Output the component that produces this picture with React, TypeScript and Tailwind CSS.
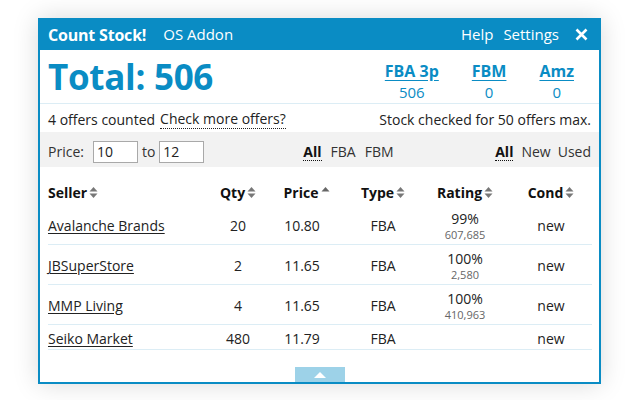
import React from "react";

function SortBoth() {
  return (
    <svg width="9" height="13" viewBox="0 0 9 13" className="inline-block ml-[2px]">
      <path d="M0.5 5.5 L4.5 1 L8.5 5.5 Z" fill="#777" />
      <path d="M0.5 7.5 L4.5 12 L8.5 7.5 Z" fill="#777" />
    </svg>
  );
}
function SortUp() {
  return (
    <svg width="9" height="13" viewBox="0 0 9 13" className="inline-block ml-[3px]">
      <path d="M0.5 5.5 L4.5 1 L8.5 5.5 Z" fill="#666" />
    </svg>
  );
}

const rows = [
  { seller: "Avalanche Brands", qty: "20", price: "10.80", type: "FBA", rating: "99%", count: "607,685", cond: "new" },
  { seller: "JBSuperStore", qty: "2", price: "11.65", type: "FBA", rating: "100%", count: "2,580", cond: "new" },
  { seller: "MMP Living", qty: "4", price: "11.65", type: "FBA", rating: "100%", count: "410,963", cond: "new" },
  { seller: "Seiko Market", qty: "480", price: "11.79", type: "FBA", rating: "", count: "", cond: "new" },
];

const grid = "grid grid-cols-[160px_60px_68px_94px_70px_91px]";

export default function App() {
  return (
    <div
      className="w-[640px] h-[400px] bg-white pt-[18px] pl-[38px] overflow-hidden"
      style={{ fontFamily: '"Open Sans", "Noto Sans", sans-serif' }}
    >
      <div className="w-[563px] h-[366px] border-2 border-t-0 border-[#0a8cc4] bg-white flex flex-col shadow-[0_0_24px_rgba(0,0,0,0.15)]">
        {/* header */}
        <div className="h-[32px] bg-[#0a8cc4] -mx-[2px] px-[10px] pt-[1px] flex items-center text-white text-[15px] leading-none">
          <span className="font-bold text-[16px] tracking-[-0.2px]">Count Stock!</span>
          <span className="ml-[17px]">OS Addon</span>
          <span className="ml-auto">Help</span>
          <span className="ml-[10px]">Settings</span>
          <svg width="13" height="13" viewBox="0 0 13 13" className="ml-[16px] mr-[3px]">
            <path d="M1.5 1.5 L11.5 11.5 M11.5 1.5 L1.5 11.5" stroke="white" strokeWidth="2.6" />
          </svg>
        </div>

        {/* totals */}
        <div className="h-[54px] flex items-center pl-[8px] pr-[25px] border-b border-[#dcedf5]">
          <div className="text-[35px] font-bold text-[#0a8cc4] leading-none tracking-[-0.3px]">Total: 506</div>
          <div className="ml-auto flex gap-[33px] text-[#0a8cc4] mt-[10px]">
            <div className="flex flex-col items-center leading-[21px]">
              <span className="font-bold text-[16px] underline underline-offset-[3px]">FBA 3p</span>
              <span className="text-[15px]">506</span>
            </div>
            <div className="flex flex-col items-center leading-[21px]">
              <span className="font-bold text-[16px] underline underline-offset-[3px]">FBM</span>
              <span className="text-[15px]">0</span>
            </div>
            <div className="flex flex-col items-center leading-[21px]">
              <span className="font-bold text-[16px] underline underline-offset-[3px]">Amz</span>
              <span className="text-[15px]">0</span>
            </div>
          </div>
        </div>

        {/* info line */}
        <div className="h-[28px] pt-[3px] flex items-center px-[8px] text-[14px] text-[#222]">
          <span>4 offers counted</span>
          <span className="ml-[5px] border-b border-dotted border-[#222] leading-[18px]">Check more offers?</span>
          <span className="ml-auto">Stock checked for 50 offers max.</span>
        </div>

        {/* filters */}
        <div className="h-[35px] pt-[4px] bg-[#f2f2f2] flex items-center px-[8px] text-[14px] text-[#333]">
          <span>Price:</span>
          <input
            readOnly
            value="10"
            className="ml-[9px] w-[45px] h-[22px] border border-[#a9a9a9] bg-white px-[3px] text-[14px] text-[#222] outline-none"
          />
          <span className="ml-[4px]">to</span>
          <input
            readOnly
            value="12"
            className="ml-[4px] w-[45px] h-[22px] border border-[#a9a9a9] bg-white px-[3px] text-[14px] text-[#222] outline-none"
          />
          <span className="ml-[99px] font-bold text-[#111] border-b border-dotted border-[#111] leading-[17px]">All</span>
          <span className="ml-[9px]">FBA</span>
          <span className="ml-[9px]">FBM</span>
          <span className="ml-auto font-bold text-[#111] border-b border-dotted border-[#111] leading-[17px]">All</span>
          <span className="ml-[8px]">New</span>
          <span className="ml-[7px]">Used</span>
        </div>

        {/* table */}
        <div className="px-[8px] text-[14px] text-[#222]">
          <div className={`${grid} h-[38px] items-center font-bold text-[#111] pt-[12px]`}>
            <div className="flex items-center">Seller<SortBoth /></div>
            <div className="flex items-center justify-center">Qty<SortBoth /></div>
            <div className="flex items-center justify-center pl-[10px]">Price<SortUp /></div>
            <div className="flex items-center justify-center">Type<SortBoth /></div>
            <div className="flex items-center justify-center">Rating<SortBoth /></div>
            <div className="flex items-center justify-center pl-[11px]">Cond<SortBoth /></div>
          </div>
          {rows.map((r, i) => (
            <div
              key={i}
              className={`${grid} ${r.rating ? "h-[40px]" : "h-[25px]"} pt-[2px] items-center border-b border-[#dcedf5] w-[544px]`}
            >
              <div className="underline underline-offset-[2px]">{r.seller}</div>
              <div className="text-center">{r.qty}</div>
              <div className="text-center">{r.price}</div>
              <div className="text-center">{r.type}</div>
              <div className="flex flex-col items-center">
                {r.rating && <span className="leading-[18px]">{r.rating}</span>}
                {r.count && <span className="text-[11px] leading-[14px] text-[#666]">{r.count}</span>}
              </div>
              <div className="text-center pl-[11px]">{r.cond}</div>
            </div>
          ))}
        </div>

        <div className="mt-auto flex justify-center">
          <div className="w-[50px] h-[15px] bg-[#9dd2e8] flex items-center justify-center">
            <svg width="12" height="6" viewBox="0 0 12 6">
              <path d="M0 6 L6 0 L12 6 Z" fill="white" />
            </svg>
          </div>
        </div>
      </div>
    </div>
  );
}
